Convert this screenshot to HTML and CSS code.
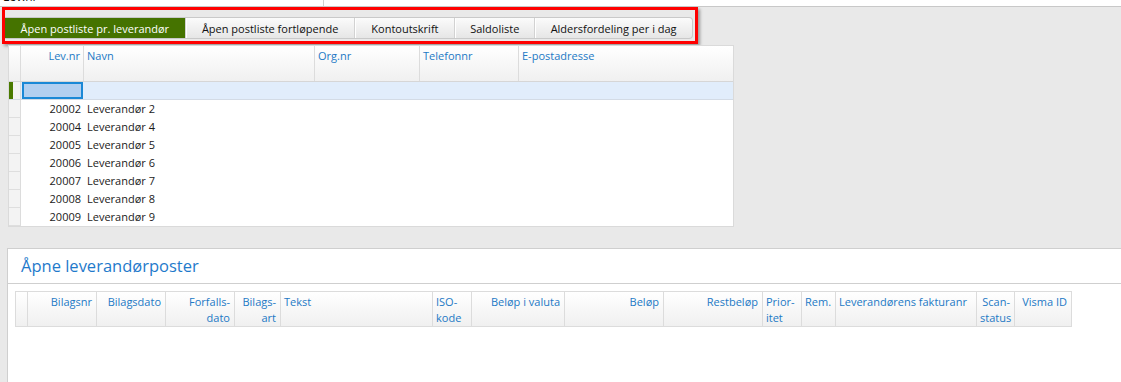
FILE: index.html
```html
<!DOCTYPE HTML>
<html lang="no">
  <head>
    <meta charset="utf-8">
    <link rel="stylesheet" href="styles.css">
  </head>
  <body>
    <div class="topstrip">
      <span class="cut">Lev.nr</span>
      <span class="cutline"></span>
    </div>

    <div class="upper">
      <div class="callout">
        <div class="tabs">
          <div class="tab active" style="width:180px">Åpen postliste pr. leverandør</div>
          <div class="tab" style="width:170px">Åpen postliste fortløpende</div>
          <div class="tab" style="width:100px">Kontoutskrift</div>
          <div class="tab" style="width:80px">Saldoliste</div>
          <div class="tab" style="width:158px">Aldersfordeling per i dag</div>
        </div>
      </div>

      <div class="grid suppliers">
        <div class="row head">
          <div class="ind"></div>
          <div class="c r">Lev.nr</div>
          <div class="c">Navn</div>
          <div class="c">Org.nr</div>
          <div class="c">Telefonnr</div>
          <div class="c">E-postadresse</div>
        </div>
        <div class="row sel">
          <div class="ind"><span class="mark"></span></div>
          <div class="c"><span class="focus"></span></div>
          <div class="c"></div>
          <div class="c"></div>
          <div class="c"></div>
          <div class="c"></div>
        </div>
        <div class="row"><div class="ind"></div><div class="c r">20002</div><div class="c">Leverandør 2</div><div class="c"></div><div class="c"></div><div class="c"></div></div>
        <div class="row"><div class="ind"></div><div class="c r">20004</div><div class="c">Leverandør 4</div><div class="c"></div><div class="c"></div><div class="c"></div></div>
        <div class="row"><div class="ind"></div><div class="c r">20005</div><div class="c">Leverandør 5</div><div class="c"></div><div class="c"></div><div class="c"></div></div>
        <div class="row"><div class="ind"></div><div class="c r">20006</div><div class="c">Leverandør 6</div><div class="c"></div><div class="c"></div><div class="c"></div></div>
        <div class="row"><div class="ind"></div><div class="c r">20007</div><div class="c">Leverandør 7</div><div class="c"></div><div class="c"></div><div class="c"></div></div>
        <div class="row"><div class="ind"></div><div class="c r">20008</div><div class="c">Leverandør 8</div><div class="c"></div><div class="c"></div><div class="c"></div></div>
        <div class="row"><div class="ind"></div><div class="c r">20009</div><div class="c">Leverandør 9</div><div class="c"></div><div class="c"></div><div class="c"></div></div>
      </div>
    </div>

    <div class="panel">
      <h2 class="title">Åpne leverandørposter</h2>
      <div class="panel-body">
        <div class="grid entries">
          <div class="row head">
            <div class="ind"></div>
            <div class="c r">Bilagsnr</div>
            <div class="c r">Bilagsdato</div>
            <div class="c r">Forfalls-<br>dato</div>
            <div class="c r">Bilags-<br>art</div>
            <div class="c">Tekst</div>
            <div class="c">ISO-<br>kode</div>
            <div class="c r">Beløp i valuta</div>
            <div class="c r">Beløp</div>
            <div class="c r">Restbeløp</div>
            <div class="c">Prior-<br>itet</div>
            <div class="c">Rem.</div>
            <div class="c">Leverandørens fakturanr</div>
            <div class="c r">Scan-<br>status</div>
            <div class="c r">Visma ID</div>
          </div>
        </div>
      </div>
    </div>
  </body>
</html>
```

FILE: styles.css
```css
body { margin:0; background:#e9e9e9; color:#1a1a1a; font:11px "Open Sans", "Liberation Sans", sans-serif; height:382px; overflow:hidden; display:flex; flex-direction:column; }

/* strip left over from the form above */
.topstrip { height:6px; background:white; border-bottom:1px solid #c8c8c8; overflow:hidden; position:relative; flex:none; }
.topstrip .cut { display:block; margin:-10px 0 0 3px; line-height:14px; font-size:12px; color:#111; }
.topstrip .cutline { position:absolute; left:323px; top:0; bottom:0; border-left:1px solid #d0d0d0; }

.upper { padding-left:2px; flex:none; }

/* red highlight box round the report tabs */
.callout { width:fit-content; border:3px solid #ff0000; padding:7px 2px 2px 0; box-shadow:2px 2px 3px rgba(0,0,0,.35); }
.tabs { display:flex; height:22px; width:688px; box-sizing:border-box; border:1px solid #c9c9c9; border-left:none; border-radius:0 4px 4px 0; background:linear-gradient(#fbfbfb, #e6e6e6); overflow:hidden; }
.tab { box-sizing:border-box; display:flex; align-items:center; justify-content:center; border-left:1px solid #d2d2d2; box-shadow:inset 1px 0 0 #fff; white-space:nowrap; color:#111; }
.tab:first-child { border-left:none; }
.tab.active { background:#457300; color:white; box-shadow:none; margin:-1px 0; }

/* grids */
.row { display:grid; }
.c { box-sizing:border-box; padding:0 3px; white-space:nowrap; overflow:hidden; }
.r { text-align:right; }
.head { background:linear-gradient(#ffffff, #f0f0f0); color:#2379c5; }
.head .c, .head .ind { border-right:1px solid #dcdcdc; padding-top:2px; line-height:16px; }

.suppliers { margin:1px 0 0 6px; width:726px; box-sizing:border-box; background:white; border:1px solid #dadada; }
.suppliers .row { grid-template-columns:12px 63px 231px 105px 99px 1fr; height:18px; line-height:17px; }
.suppliers .head { height:35px; border-bottom:1px solid #d6d6d6; }
.suppliers .head .c:last-child { border-right:none; }
.suppliers .ind { background:#f3f3f3; border-right:1px solid #dcdcdc; border-bottom:1px solid #dedede; box-sizing:border-box; }
.suppliers .head .ind { border-bottom:none; background:none; }
.suppliers .sel { background:#e1edfb; height:18px; border-bottom:1px solid #d3dbe5; box-sizing:border-box; }
.suppliers .sel .ind { position:relative; border-bottom:none; }
.mark { position:absolute; left:0; top:0; bottom:0; width:4px; background:#4a7a00; }
.focus { display:block; box-sizing:border-box; height:17px; margin:0 -2px 0 -2px; border:2px solid #1a88d6; background:#b2cff0; }

.panel { flex:1; margin:21px 0 0 7px; background:white; border-top:1px solid #cfcfcf; border-left:1px solid #cfcfcf; }
.title { margin:0; height:34px; line-height:34px; padding-left:13px; font-weight:normal; font-size:16.5px; color:#1f7acb; border-bottom:1px solid #cfcfcf; }
.panel-body { padding:7px 0 0 7px; }
.entries { width:fit-content; border:1px solid #dcdcdc; }
.entries .row { grid-template-columns:12px 69px 69px 69px 46px 152px 39px 93px 99px 99px 39px 34px 141px 38px 56px; height:34px; }
.entries .head .c:last-child { border-right:none; }
.entries .head .c.r { padding-right:4px; }
```
